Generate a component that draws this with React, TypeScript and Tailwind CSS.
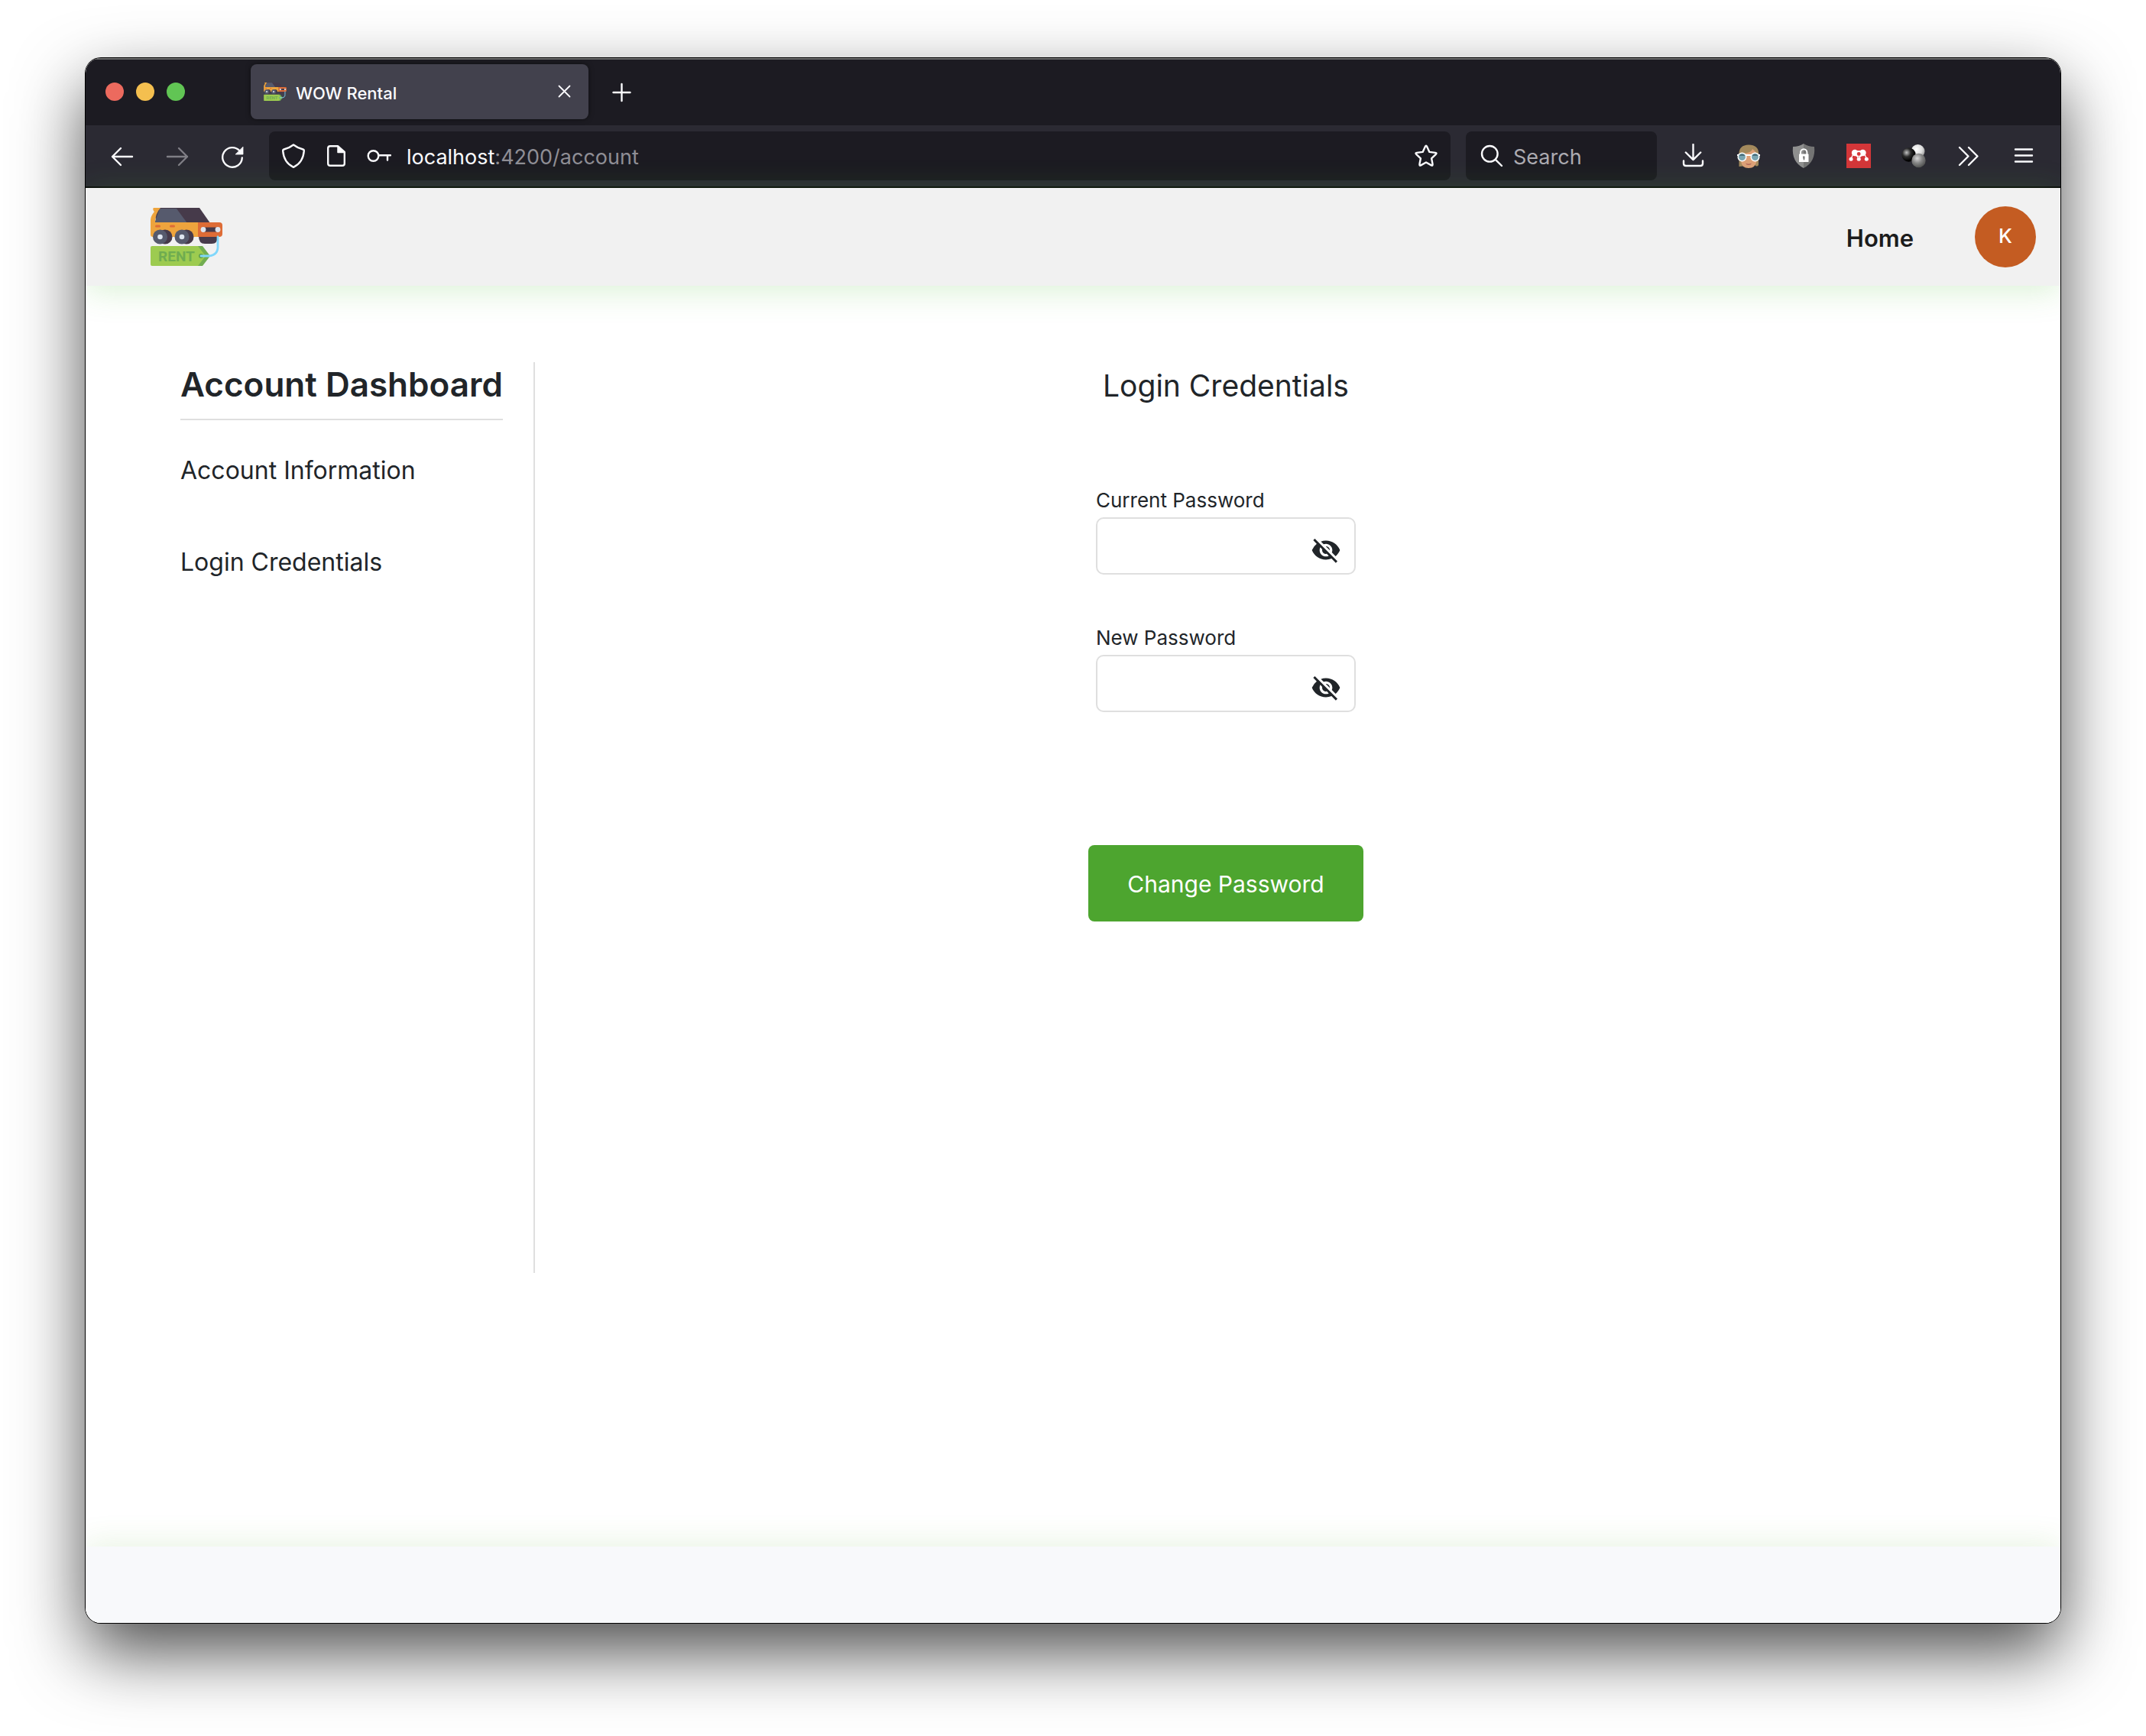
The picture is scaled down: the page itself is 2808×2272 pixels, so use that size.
import React, { useState } from "react";
import { MdVisibilityOff } from "react-icons/md";

type IconProps = { children: React.ReactNode; className?: string };

function Icon({ children, className = "text-[#fbfbfe]" }: IconProps) {
  return (
    <svg
      viewBox="0 0 32 32"
      className={`block size-8 shrink-0 ${className}`}
      fill="none"
      stroke="currentColor"
      strokeWidth="2.4"
      strokeLinecap="round"
      strokeLinejoin="round"
      aria-hidden="true"
    >
      {children}
    </svg>
  );
}

function RentalLogo({ className }: { className: string }) {
  return (
    <svg viewBox="0 0 94 76" className={className} aria-hidden="true">
      <path d="M63 37h25q0 10-8 10h-9q-8 0-8-10z" fill="#473b4b" />
      <path d="M4 0h60l14 20v2H8z" fill="#463a4a" />
      <path d="M12 1h22l14 19H5z" fill="#565a6d" />
      <path d="M4 0h9q-7 8-7 19h56v19H3q-3 0-3-3V16q0-5 5-11Q2 2 4 0z" fill="#eea43d" />
      <path d="M62 19h28q4 0 4 4v11q0 4-4 4H62z" fill="#de6c36" />
      <rect x="6" y="22.500" width="7" height="3" rx="1.500" fill="#de6c36" />
      <rect x="25" y="22.500" width="7" height="3" rx="1.500" fill="#de6c36" />
      <rect x="69" y="25.500" width="18" height="6" fill="#463a4a" />
      <circle cx="69" cy="28.500" r="3.400" fill="#dfe6f0" />
      <circle cx="88" cy="28.500" r="3.400" fill="#dfe6f0" />
      <circle cx="19" cy="38" r="9.500" fill="#463a4a" />
      <circle cx="47" cy="38" r="9.500" fill="#463a4a" />
      <circle cx="12.500" cy="38" r="9.500" fill="#565a6d" />
      <circle cx="41" cy="38" r="9.500" fill="#565a6d" />
      <circle cx="12.500" cy="38" r="3.300" fill="#dfe6f0" />
      <circle cx="41" cy="38" r="3.300" fill="#dfe6f0" />
      <path d="M61 50h7l10 13-10 13h-7z" fill="#72ad51" />
      <path d="M2 50h60l10 13-10 13H2q-2 0-2-2V52q0-2 2-2z" fill="#9dcb50" />
      <circle cx="66" cy="63" r="3" fill="#5f9f4c" />
      <path d="M66 63h10q13-1 12-14V38" fill="none" stroke="#80d7fb" strokeWidth="2.800" strokeLinecap="round" />
      <text
        x="34"
        y="70"
        textAnchor="middle"
        fontSize="19"
        fontWeight="700"
        fontFamily="'Roboto', sans-serif"
        fill="#6fac50"
      >
        RENT
      </text>
    </svg>
  );
}

function TabBar() {
  return (
    <div className="flex h-[88px] items-center bg-[#1c1b22] pl-[26px] shadow-[inset_0_2px_0_#6a6a6a]">
      <div className="mr-[86px] flex gap-4">
        <button aria-label="Close window" className="size-6 rounded-full bg-[#ec6a5e]" />
        <button aria-label="Minimize window" className="size-6 rounded-full bg-[#f4bf4f]" />
        <button aria-label="Zoom window" className="size-6 rounded-full bg-[#61c554]" />
      </div>
      <div className="flex h-[72px] w-[442px] items-center rounded-lg bg-[#42414d] px-4 shadow-[0_0_6px_rgba(0,0,0,0.5)]">
        <RentalLogo className="h-6 w-8 shrink-0" />
        <span className="ml-[11px] flex-1 pt-[3px] text-[22px] leading-8 font-medium text-[#fbfbfe]">WOW Rental</span>
        <button aria-label="Close tab">
          <Icon>
            <path d="M9.500 8.500l14 14M23.500 8.500l-14 14" strokeWidth="1.800" />
          </Icon>
        </button>
      </div>
      <button aria-label="New tab" className="ml-7">
        <Icon>
          <path d="M15.500 6v22M4.500 17h22" />
        </Icon>
      </button>
    </div>
  );
}

function Toolbar() {
  return (
    <div className="flex h-[82px] items-center border-b-2 border-[#0c0c0d] bg-[#2b2a33] px-8">
      <div className="mr-8 flex gap-10">
        <button aria-label="Back">
          <Icon>
            <path d="M3 17h26M14 6L3 17l11 11" />
          </Icon>
        </button>
        <button aria-label="Forward" disabled>
          <Icon className="text-[#7f7e85]">
            <path d="M3 17h26M18 6l11 11-11 11" />
          </Icon>
        </button>
        <button aria-label="Reload">
          <Icon>
            <path d="M28.800 18.500A12.800 12.800 0 1 1 25.500 9.300" />
            <path d="M30 4.500V14h-9.500z" fill="currentColor" strokeWidth="0.800" />
          </Icon>
        </button>
      </div>

      <div className="flex h-16 min-w-0 flex-1 items-center rounded-lg bg-[#1c1b22] px-4">
        <Icon>
          <path d="M16 1.500Q21 5.500 28.500 7.500Q30 8 29.800 9.500C29 20 24 27 16 30.800C8 27 3 20 2.200 9.500Q2 8 3.500 7.500Q11 5.500 16 1.500Z" />
        </Icon>
        <span className="ml-6">
          <Icon>
            <path d="M18 3.200H8Q5.200 3.200 5.200 6v20Q5.200 28.800 8 28.800h16Q26.800 28.800 26.800 26V11z" />
            <path d="M18 3.500V11.500h8.500z" fill="currentColor" strokeWidth="1.500" />
          </Icon>
        </span>
        <span className="ml-6">
          <Icon>
            <circle cx="8.500" cy="16" r="6.800" />
            <path d="M15.500 15.200H31M27 15.500V21.500" />
          </Icon>
        </span>
        <span className="ml-5 flex-1 pt-[3px] text-[27px] leading-9 text-[#8f8e95]">
          <span className="text-[#fbfbfe]">localhost</span>:4200/account
        </span>
        <button aria-label="Bookmark this page">
          <Icon>
            <path d="M17.200 4.100L20.400 10.900L28.100 11.900Q30.700 12.200 28.600 14.200L23.100 19.300L24.500 26.600Q25.100 29.500 22.500 28.100L16 24.500L9.500 28.100Q6.900 29.500 7.500 26.600L8.900 19.300L3.400 14.200Q1.300 12.200 3.900 11.900L11.600 10.900L14.800 4.100Q16 1.500 17.200 4.100Z" />
          </Icon>
        </button>
      </div>

      <label className="mr-8 ml-5 flex h-16 w-[250px] items-center gap-3 rounded-lg bg-[#1c1b22] pl-[18px]">
        <Icon>
          <circle cx="13.300" cy="13.300" r="10.300" />
          <path d="M20.800 20.800L29 29" />
        </Icon>
        <input
          aria-label="Search the web"
          placeholder="Search"
          className="w-full min-w-0 flex-1 bg-transparent pt-[3px] text-[27px] leading-9 text-white outline-none placeholder:text-[#acabb1]"
        />
      </label>

      <div className="flex gap-10">
        <button aria-label="Downloads">
          <Icon>
            <path d="M15.500 1v20M5.800 11.500l9.700 9.700 9.700-9.700M3 22.500V26q0 3 3 3h19q3 0 3-3v-3.500" />
          </Icon>
        </button>
        <button aria-label="Reader profile extension">
          <Icon>
            <g stroke="none">
              <path d="M3.500 30V14Q3 2 16 1.500Q30 2 29 14v14q-2 3-5 0z" fill="#a3895c" />
              <path d="M6 14Q20 12 21 7q5 3 6 9v6q-2 10-11 10T6 23z" fill="#dda077" />
              <path d="M12 25.500q4 2 8 0-1 2.500-4 2.500t-4-2.500z" fill="#b1655a" />
              <path d="M1 14h30v2H1z" fill="#fff" />
              <circle cx="7.500" cy="17.500" r="6" fill="#fff" />
              <circle cx="24.500" cy="17.500" r="6" fill="#fff" />
              <circle cx="7.500" cy="17.500" r="4.500" fill="#7aa5b1" />
              <circle cx="24.500" cy="17.500" r="4.500" fill="#7aa5b1" />
              <path d="M3.500 16a4.500 4.500 0 0 1 8 0zM20.500 16a4.500 4.500 0 0 1 8 0z" fill="#4b6f7c" />
            </g>
          </Icon>
        </button>
        <button aria-label="Privacy extension">
          <Icon>
            <g stroke="none">
              <path d="M16 0Q22 4 30 4Q32 24 16 32z" fill="#747474" />
              <path d="M16 0Q10 4 2 4Q0 24 16 32z" fill="#8f8f8f" />
              <rect x="10" y="13.500" width="12.500" height="10.500" rx="0.500" fill="#fff" />
              <path d="M15 16.500h2.500v2.500l-.5 2.500h-1l-.7-2.500z" fill="#777" />
            </g>
            <path d="M12 14v-2.500a4.200 4.200 0 0 1 8.400 0V14" stroke="#fff" strokeWidth="2" />
          </Icon>
        </button>
        <button aria-label="Reference manager extension">
          <Icon>
            <rect width="32" height="32" fill="#d43639" stroke="none" />
            <path d="M9 13l-3 7M13 15l3.200 5M19.500 15l-3.300 5M23.500 13l3 7" stroke="#fff" strokeWidth="1.300" />
            <g fill="#fff" stroke="none">
              <circle cx="11" cy="12" r="4.200" />
              <circle cx="21.500" cy="12" r="4.200" />
              <path d="M11 7.800q5 3 10.500 0v8q-5.500 3-10.500 0z" />
              <circle cx="6" cy="20.300" r="2.500" />
              <circle cx="16.200" cy="20.300" r="2.500" />
              <circle cx="26.300" cy="20.300" r="2.500" />
            </g>
            <circle cx="16.200" cy="13.500" r="2.400" fill="#d43639" stroke="none" />
          </Icon>
        </button>
        <button aria-label="Molecule extension">
          <Icon>
            <defs>
              <radialGradient id="ballWhite" cx="0.400" cy="0.350" r="0.700">
                <stop offset="0" stopColor="#ffffff" />
                <stop offset="0.600" stopColor="#dcdcdc" />
                <stop offset="1" stopColor="#8d8d8d" />
              </radialGradient>
              <radialGradient id="ballBlack" cx="0.350" cy="0.350" r="0.600">
                <stop offset="0" stopColor="#c4c4c4" />
                <stop offset="0.500" stopColor="#2c2c2c" />
                <stop offset="1" stopColor="#000000" />
              </radialGradient>
              <radialGradient id="ballGray" cx="0.400" cy="0.350" r="0.700">
                <stop offset="0" stopColor="#d6d6d6" />
                <stop offset="0.500" stopColor="#858585" />
                <stop offset="1" stopColor="#4c4c4c" />
              </radialGradient>
            </defs>
            <g stroke="none">
              <circle cx="21.500" cy="10" r="9" fill="url(#ballWhite)" />
              <circle cx="9.500" cy="14.500" r="9.200" fill="url(#ballBlack)" />
              <circle cx="22.500" cy="22" r="9.200" fill="url(#ballGray)" />
            </g>
          </Icon>
        </button>
        <button aria-label="More tools">
          <Icon>
            <path d="M4 5l11.500 11.500L4 28M16 5l11.500 11.500L16 28" />
          </Icon>
        </button>
        <button aria-label="Application menu">
          <Icon>
            <path d="M5 7.500h22M5 15.500h22M5 23.500h22" />
          </Icon>
        </button>
      </div>
    </div>
  );
}

function PasswordField({ id, label }: { id: string; label: string }) {
  const [visible, setVisible] = useState(false);
  return (
    <div className="w-[340px]">
      <label htmlFor={id} className="mb-1 block text-[26px] leading-9">
        {label}
      </label>
      <div className="flex h-[75px] items-center rounded-[10px] border-2 border-[#dfdfdf] bg-white pr-[17px] pl-4">
        <input id={id} type={visible ? "text" : "password"} className="min-w-0 flex-1 text-[26px] outline-none" />
        <button type="button" aria-label={`Show ${label.toLowerCase()}`} className="mt-2.5" onClick={() => setVisible(!visible)}>
          <MdVisibilityOff className="size-10" />
        </button>
      </div>
    </div>
  );
}

export default function App() {
  return (
    <div className="flex min-h-screen flex-col bg-white px-28 pt-[76px] pb-[148px] font-['Inter','Liberation_Sans',sans-serif] text-[#212529]">
      <div className="flex flex-1 flex-col rounded-[20px] shadow-[0_0_0_1px_#000,0_38px_90px_rgba(0,0,0,0.7)]">
        <div className="flex flex-1 flex-col overflow-hidden rounded-[20px] bg-white">
          <TabBar />
          <Toolbar />

          <header className="flex h-32 items-center bg-[#f1f1f1] pr-8 pl-[85px] shadow-[0_6px_40px_rgba(80,190,60,0.22)]">
            <a href="#home" aria-label="WOW Rental" className="mr-auto">
              <RentalLogo className="h-[76px] w-[94px]" />
            </a>
            <a href="#home" className="mr-20 pt-[3px] text-[31px] leading-10 font-semibold text-[#1c1c1c]">
              Home
            </a>
            <button className="size-20 rounded-full bg-[#c45c22] pb-1 text-[26px] font-medium text-white">K</button>
          </header>

          <main className="flex flex-1 pt-[100px] pr-[188px] pb-[358px] pl-[124px]">
            <aside className="w-[464px] shrink-0 border-r-2 border-[#dfdfdf] pr-10">
              <h1 className="border-b-2 border-[#dfdfdf] pb-4 text-[44px] leading-[58px] font-semibold whitespace-nowrap">
                Account Dashboard
              </h1>
              <nav className="mt-[42px] flex flex-col items-start gap-[72px] text-[32px] leading-[48px]">
                <a href="#information">Account Information</a>
                <a href="#credentials">Login Credentials</a>
              </nav>
            </aside>

            <form className="flex flex-1 flex-col items-center pt-[7px]" onSubmit={(e) => e.preventDefault()}>
              <h2 className="mb-[108px] text-[39px] leading-[48px]">Login Credentials</h2>
              <div className="flex flex-col gap-[65px]">
                <PasswordField id="current-password" label="Current Password" />
                <PasswordField id="new-password" label="New Password" />
              </div>
              <button type="submit" className="mt-[174px] h-[100px] w-[360px] rounded-lg bg-[#4da52f] pt-0.5 text-[30px] text-white">
                Change Password
              </button>
            </form>
          </main>

          <footer className="h-[100px] bg-[#f8f9fb] shadow-[0_-4px_40px_rgba(90,170,50,0.14)]" />
        </div>
      </div>
    </div>
  );
}
